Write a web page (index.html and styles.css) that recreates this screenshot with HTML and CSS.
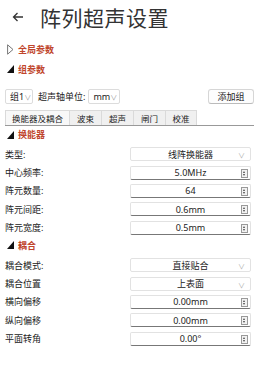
FILE: index.html
```html
<!DOCTYPE html>
<html lang="zh">
<head>
  <meta charset="UTF-8" />
  <meta name="viewport" content="width=device-width, initial-scale=1.0" />
  <title>阵列超声设置</title>
  <link rel="stylesheet" href="styles.css">
</head>
<body>
  <header class="titlebar">
    <svg class="back" width="12" height="10" viewBox="0 0 12 10">
      <path d="M11 5H1.5M5.5 1L1.5 5l4 4" fill="none" stroke="#333" stroke-width="1.3"/>
    </svg>
    <h1>阵列超声设置</h1>
  </header>

  <div class="expander first">
    <svg class="tri" width="7" height="11" viewBox="0 0 7 11"><path d="M0.6 0.8L6 5.5 0.6 10.2Z" fill="none" stroke="#777" stroke-width="1"/></svg>
    <span class="head">全局参数</span>
  </div>
  <div class="expander">
    <svg class="tri" width="7" height="8" viewBox="0 0 7 8"><path d="M7 0V8H0Z" fill="#111"/></svg>
    <span class="head">组参数</span>
  </div>

  <div class="toolbar">
    <div class="combo small">组1<span class="chev">&#8744;</span></div>
    <span class="tlabel">超声轴单位:</span>
    <div class="combo unit">mm<span class="chev">&#8744;</span></div>
    <button class="btn">添加组</button>
  </div>

  <div class="tabs">
    <div class="tab active t1">换能器及耦合</div>
    <div class="tab t2">波束</div>
    <div class="tab t2">超声</div>
    <div class="tab t2">闸门</div>
    <div class="tab t3">校准</div>
  </div>

  <div class="section">
    <svg class="tri" width="7" height="8" viewBox="0 0 7 8"><path d="M7 0V8H0Z" fill="#111"/></svg>
    <span class="head">换能器</span>
  </div>
  <div class="form">
    <div class="row"><span class="lbl">类型:</span><div class="field select">线阵换能器<span class="chev">&#8744;</span></div></div>
    <div class="row"><span class="lbl">中心频率:</span><div class="field spin">5.0MHz<span class="spinbtn"></span></div></div>
    <div class="row"><span class="lbl">阵元数量:</span><div class="field spin">64<span class="spinbtn"></span></div></div>
    <div class="row"><span class="lbl">阵元间距:</span><div class="field spin">0.6mm<span class="spinbtn"></span></div></div>
    <div class="row"><span class="lbl">阵元宽度:</span><div class="field spin">0.5mm<span class="spinbtn"></span></div></div>
  </div>

  <div class="section">
    <svg class="tri" width="7" height="8" viewBox="0 0 7 8"><path d="M7 0V8H0Z" fill="#111"/></svg>
    <span class="head">耦合</span>
  </div>
  <div class="form">
    <div class="row"><span class="lbl">耦合模式:</span><div class="field select">直接贴合<span class="chev">&#8744;</span></div></div>
    <div class="row"><span class="lbl">耦合位置</span><div class="field select">上表面<span class="chev">&#8744;</span></div></div>
    <div class="row"><span class="lbl">横向偏移</span><div class="field spin">0.00mm<span class="spinbtn"></span></div></div>
    <div class="row"><span class="lbl">纵向偏移</span><div class="field spin">0.00mm<span class="spinbtn"></span></div></div>
    <div class="row"><span class="lbl">平面转角</span><div class="field spin">0.00°<span class="spinbtn"></span></div></div>
  </div>
</body>
</html>
```

FILE: styles.css
```css
body {
  margin: 0;
  width: 261px;
  background: #fff;
  color: #222;
  font-family: "Noto Sans", "Noto Sans CJK SC", sans-serif;
  font-size: 9px;
}
.titlebar {
  display: flex;
  align-items: center;
  height: 34px;
  padding-left: 12px;
}
.back {
  margin-right: 16px;
}
h1 {
  margin: 0;
  font-size: 21px;
  font-weight: normal;
  color: #333;
  letter-spacing: 0.5px;
  font-family: "Noto Sans CJK SC", sans-serif;
}
.expander, .section {
  display: flex;
  align-items: center;
  height: 20px;
  padding-left: 7px;
}
.expander.first {
  margin-top: 5px;
}
.section {
  height: 17px;
}
.head {
  color: #c0452c;
  font-weight: bold;
  font-size: 9px;
  margin-left: 4px;
}
.toolbar {
  display: flex;
  align-items: center;
  height: 15px;
  padding: 10px 7px 0 5px;
}
.combo {
  display: flex;
  align-items: center;
  justify-content: space-between;
  white-space: nowrap;
  height: 15px;
  padding: 0 3px 0 4px;
  border: 1px solid #dcdcdc;
  border-radius: 2px;
  box-sizing: border-box;
}
.small { width: 28px; }
.unit { width: 32px; margin-left: 3px; }
.tlabel { margin-left: 5px; }
.chev {
  color: #999;
  font-size: 7px;
}
.btn {
  margin-left: auto;
  width: 46px;
  height: 15px;
  padding: 0;
  font: inherit;
  color: #222;
  background: #fdfdfd;
  border: 1px solid #d6d6d6;
  border-bottom-color: #bbb;
  border-radius: 3px;
}
.tabs {
  display: flex;
  margin: 6px 7px 0 5px;
  height: 15px;
  border-bottom: 1px solid #999;
}
.tab {
  display: flex;
  align-items: center;
  justify-content: center;
  font-size: 8.5px;
  background: #f0f0f0;
  border: 1px solid #dadada;
  border-bottom: none;
  border-left: none;
  box-sizing: border-box;
}
.t1 { width: 65px; border-left: 1px solid #dadada; }
.t2 { width: 32px; }
.t3 { width: 31px; }
.tab.active {
  background: #f8f8f8;
}
.form {
  padding: 2px 10px 0 5px;
}
.row {
  display: flex;
  align-items: center;
  justify-content: space-between;
  height: 18.4px;
}
.field {
  position: relative;
  width: 121px;
  height: 14px;
  box-sizing: border-box;
  display: flex;
  align-items: center;
  justify-content: center;
  border: 1px solid #e2e2e2;
  border-radius: 2px;
}
.spin {
  border-bottom: 1px solid #777;
}
.select .chev {
  position: absolute;
  right: 5px;
  top: 2px;
  color: #aaa;
}
.spinbtn {
  position: absolute;
  right: 2px;
  top: 2px;
  width: 7px;
  height: 9px;
  border: 1px solid #999;
  box-sizing: border-box;
  background: #f2f2f2;
}
.spinbtn::before, .spinbtn::after {
  content: "";
  position: absolute;
  left: 1px;
  border-left: 1.5px solid transparent;
  border-right: 1.5px solid transparent;
}
.spinbtn::before {
  top: 1px;
  border-bottom: 2px solid #444;
}
.spinbtn::after {
  bottom: 1px;
  border-top: 2px solid #444;
}
```
